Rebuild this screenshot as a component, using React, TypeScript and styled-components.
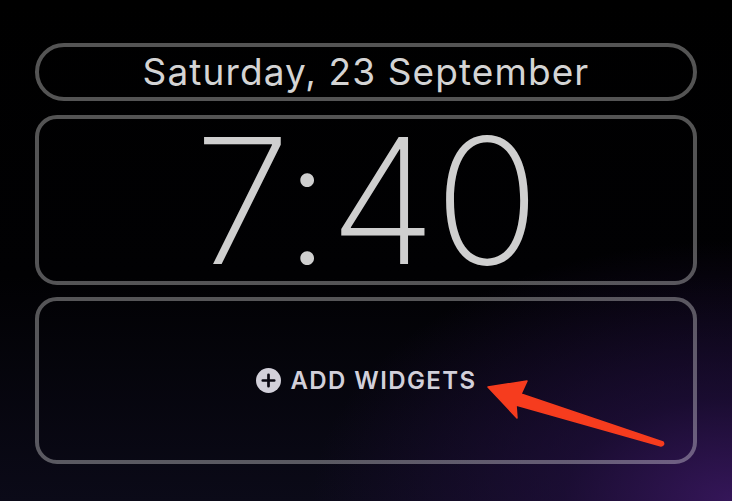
import React from "react";
import styled, { createGlobalStyle } from "styled-components";

const Global = createGlobalStyle`
  html, body { margin: 0; padding: 0; background: #000; }
  #root { width: 732px; height: 501px; }
`;

const Screen = styled.div`
  position: relative;
  width: 732px;
  height: 501px;
  box-sizing: border-box;
  padding: 43px 35px 0 35px;
  display: flex;
  flex-direction: column;
  overflow: hidden;
  font-family: Inter, "Noto Sans", sans-serif;
  background:
    radial-gradient(ellipse 420px 260px at 100% 100%, rgba(60, 24, 100, 0.85) 0%, rgba(38, 16, 70, 0.6) 40%, rgba(0, 0, 0, 0) 100%),
    linear-gradient(180deg, #000 0%, #010103 55%, #0b0a18 100%);
`;

const Slot = styled.div<{ $h: number; $gap: number; $round?: boolean }>`
  box-sizing: border-box;
  height: ${(p) => p.$h}px;
  margin-bottom: ${(p) => p.$gap}px;
  border: 4px solid rgba(255, 255, 255, 0.33);
  border-radius: ${(p) => (p.$round ? "29px" : "22px")};
  display: flex;
  align-items: center;
  justify-content: center;
`;

const DateText = styled.div`
  font-size: 37px;
  font-weight: 400;
  color: #d4d4d4;
  letter-spacing: 1.1px;
  line-height: 44px;
`;

const TimeText = styled.div`
  font-size: 175px;
  font-weight: 200;
  color: #cfcfcf;
  line-height: 150px;
  letter-spacing: -2px;
`;

const AddButton = styled.div`
  display: flex;
  align-items: center;
  gap: 10px;
  color: #d2d0da;
  font-size: 24px;
  line-height: 28px;
  font-weight: 600;
  letter-spacing: 1.4px;
  margin-left: 0;
`;

const PlusIcon = styled.svg`
  width: 25px;
  height: 25px;
  flex: none;
`;

const Arrow = styled.svg`
  position: absolute;
  left: 0;
  top: 0;
  width: 732px;
  height: 501px;
  pointer-events: none;
`;

export default function App() {
  return (
    <>
      <Global />
      <Screen>
        <Slot $h={58} $gap={14} $round>
          <DateText>Saturday, 23 September</DateText>
        </Slot>
        <Slot $h={170} $gap={12}>
          <TimeText>7:40</TimeText>
        </Slot>
        <Slot $h={167} $gap={0}>
          <AddButton>
            <PlusIcon viewBox="0 0 24 24">
              <circle cx="12" cy="12" r="12" fill="#d2d0da" />
              <path d="M12 6.5v11M6.5 12h11" stroke="#0a0812" strokeWidth="2.6" strokeLinecap="round" />
            </PlusIcon>
            ADD WIDGETS
          </AddButton>
        </Slot>
        <Arrow viewBox="0 0 732 501">
          <path
            d="M488 387 L527 381 L521 394 L663 442 Q665 445 661 446 L516 405 L517 418 Z"
            fill="#f63c1e"
            stroke="#f63c1e"
            strokeWidth="1.5"
            strokeLinejoin="round"
          />
        </Arrow>
      </Screen>
    </>
  );
}
